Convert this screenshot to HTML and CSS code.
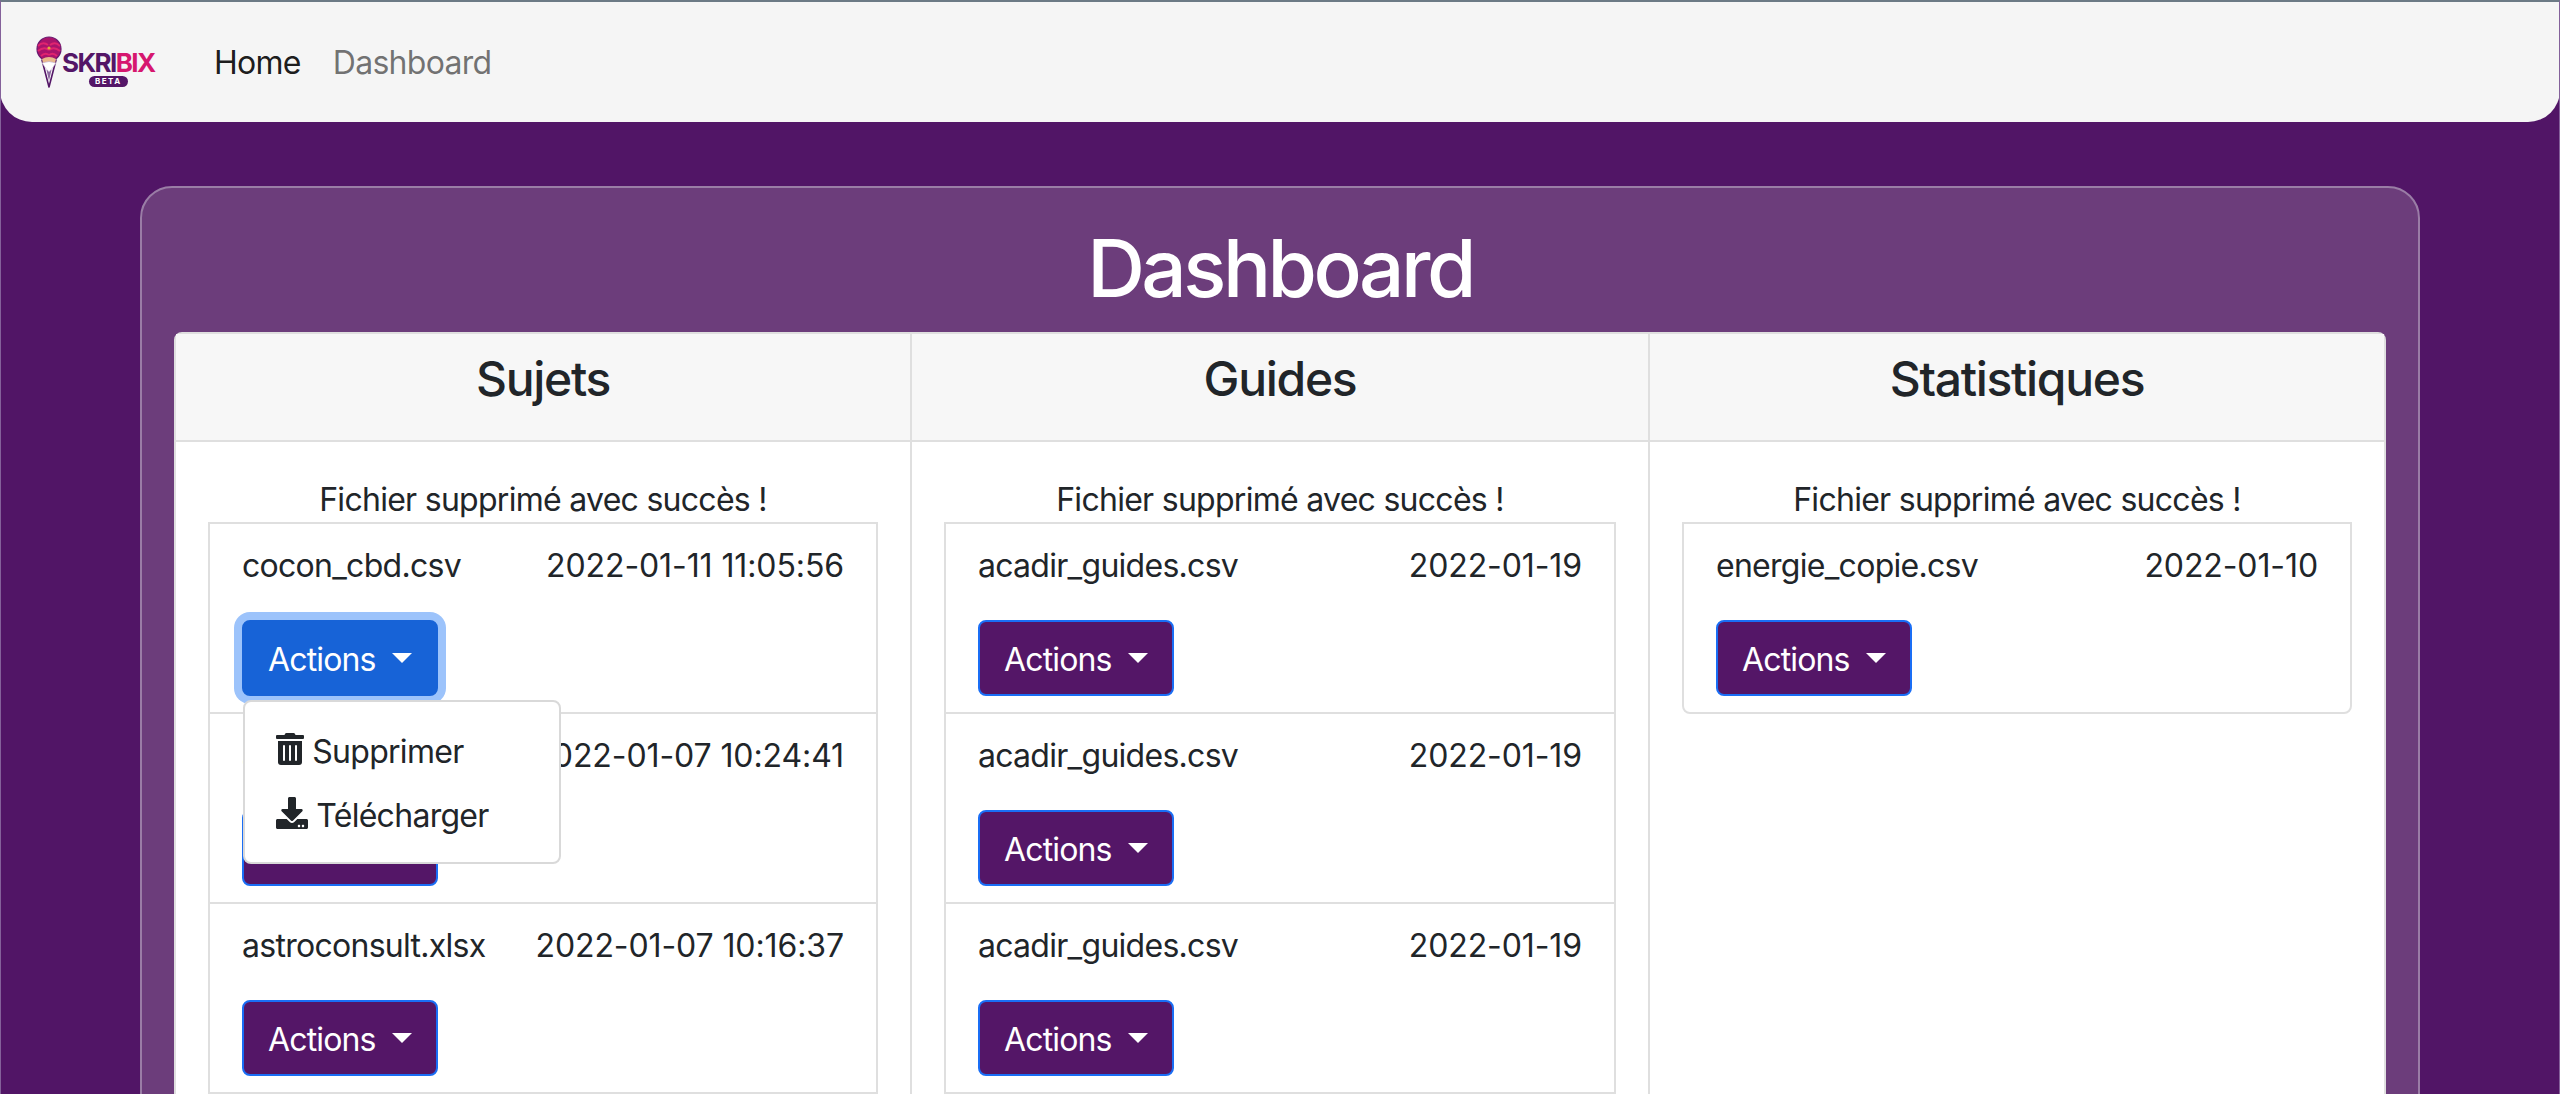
FILE: index.html
```html
<!DOCTYPE html>
<html lang="fr">
<head>
    <meta charset="UTF-8">
    <meta name="viewport" content="width=device-width, initial-scale=1.0">
    <title>Dashboard</title>
    <link rel="stylesheet" href="styles.css">
</head>
<body>

<nav class="navbar">
    <a class="brand" href="#">
        <svg class="brand-icon" viewBox="0 0 30 52" width="30" height="52" aria-hidden="true">
            <path d="M8 24 L15 51 L22 24 Z" fill="#fff" stroke="#541667" stroke-width="1.6" stroke-linejoin="round"/>
            <path d="M12.5 34 L15 45 L17.5 34 Z" fill="#8d6aa0"/>
            <circle cx="15" cy="13" r="12" fill="#a9146c" stroke="#6b1a70" stroke-width="1.2"/>
            <path d="M4 10 Q9 5 14 9 M4 15 Q10 10 15 14 M7 20 Q11 16 15 19 M26 10 Q21 5 16 9 M26 15 Q20 10 15 14 M23 20 Q19 16 15 19" stroke="#e0246f" stroke-width="2" fill="none"/>
            <circle cx="15" cy="12" r="1.6" fill="#e5a93c"/>
            <path d="M8 23 Q15 19 22 23 L21 27 L9 27 Z" fill="#e9b98c"/>
            <path d="M8 27 Q15 24 22 27 Q18 33 15 36 Q12 33 8 27 Z" fill="#fff" stroke="#b9a3c4" stroke-width="0.6"/>
        </svg>
        <span class="brand-text">
            <span class="brand-name"><span class="sk">SKRI</span><span class="bx">BIX</span></span>
            <span class="brand-beta">BETA</span>
        </span>
    </a>
    <a class="nav-link active" href="#">Home</a>
    <a class="nav-link" href="#">Dashboard</a>
</nav>

<main class="main">
    <section class="panel">
        <h1>Dashboard</h1>
        <div class="card-group">

            <div class="card">
                <div class="card-header"><h2>Sujets</h2></div>
                <div class="card-body">
                    <p class="message">Fichier supprimé avec succès !</p>
                    <ul class="list-group">
                        <li class="list-item">
                            <div class="file-row"><span>cocon_cbd.csv</span><span class="date">2022-01-11 11:05:56</span></div>
                            <div class="dropdown">
                                <button class="btn-actions open">Actions <i class="caret"></i></button>
                                <div class="dropdown-menu">
                                    <a class="dropdown-item" href="#">
                                        <svg class="icon" viewBox="0 0 448 512" width="28" height="32" aria-hidden="true"><path d="M32 464a48 48 0 0 0 48 48h288a48 48 0 0 0 48-48V128H32zm272-256a16 16 0 0 1 32 0v224a16 16 0 0 1-32 0zm-96 0a16 16 0 0 1 32 0v224a16 16 0 0 1-32 0zm-96 0a16 16 0 0 1 32 0v224a16 16 0 0 1-32 0zM432 32H312l-9.4-18.7A24 24 0 0 0 281.1 0H166.8a23.72 23.72 0 0 0-21.4 13.3L136 32H16A16 16 0 0 0 0 48v32a16 16 0 0 0 16 16h416a16 16 0 0 0 16-16V48a16 16 0 0 0-16-16z"/></svg>
                                        Supprimer
                                    </a>
                                    <a class="dropdown-item" href="#">
                                        <svg class="icon" viewBox="0 0 512 512" width="32" height="32" aria-hidden="true"><path d="M216 0h80c13.3 0 24 10.7 24 24v168h87.7c17.8 0 26.7 21.5 14.1 34.1L269.7 378.3c-7.5 7.5-19.8 7.5-27.3 0L90.1 226.1c-12.6-12.6-3.7-34.1 14.1-34.1H192V24c0-13.3 10.7-24 24-24zm296 376v112c0 13.3-10.7 24-24 24H24c-13.3 0-24-10.7-24-24V376c0-13.3 10.7-24 24-24h146.7l49 49c20.1 20.1 52.5 20.1 72.6 0l49-49H488c13.3 0 24 10.7 24 24zm-124 88c0-11-9-20-20-20s-20 9-20 20 9 20 20 20 20-9 20-20zm64 0c0-11-9-20-20-20s-20 9-20 20 9 20 20 20 20-9 20-20z"/></svg>
                                        Télécharger
                                    </a>
                                </div>
                            </div>
                        </li>
                        <li class="list-item">
                            <div class="file-row"><span>astroconsult.xlsx</span><span class="date">2022-01-07 10:24:41</span></div>
                            <div class="dropdown"><button class="btn-actions">Actions <i class="caret"></i></button></div>
                        </li>
                        <li class="list-item">
                            <div class="file-row"><span>astroconsult.xlsx</span><span class="date">2022-01-07 10:16:37</span></div>
                            <div class="dropdown"><button class="btn-actions">Actions <i class="caret"></i></button></div>
                        </li>
                    </ul>
                </div>
            </div>

            <div class="card">
                <div class="card-header"><h2>Guides</h2></div>
                <div class="card-body">
                    <p class="message">Fichier supprimé avec succès !</p>
                    <ul class="list-group">
                        <li class="list-item">
                            <div class="file-row"><span>acadir_guides.csv</span><span class="date">2022-01-19</span></div>
                            <div class="dropdown"><button class="btn-actions">Actions <i class="caret"></i></button></div>
                        </li>
                        <li class="list-item">
                            <div class="file-row"><span>acadir_guides.csv</span><span class="date">2022-01-19</span></div>
                            <div class="dropdown"><button class="btn-actions">Actions <i class="caret"></i></button></div>
                        </li>
                        <li class="list-item">
                            <div class="file-row"><span>acadir_guides.csv</span><span class="date">2022-01-19</span></div>
                            <div class="dropdown"><button class="btn-actions">Actions <i class="caret"></i></button></div>
                        </li>
                    </ul>
                </div>
            </div>

            <div class="card">
                <div class="card-header"><h2>Statistiques</h2></div>
                <div class="card-body">
                    <p class="message">Fichier supprimé avec succès !</p>
                    <ul class="list-group">
                        <li class="list-item">
                            <div class="file-row"><span>energie_copie.csv</span><span class="date">2022-01-10</span></div>
                            <div class="dropdown"><button class="btn-actions">Actions <i class="caret"></i></button></div>
                        </li>
                    </ul>
                </div>
            </div>

        </div>
    </section>
</main>

</body>
</html>
```

FILE: styles.css
```css
html, body {
    height: 100%;
    margin: 0;
}

body {
    box-sizing: border-box;
    height: 1094px;
    overflow: hidden;
    background-color: #511566;
    border-top: 2px solid #6c7a85;
    border-left: 1px solid #84619a;
    border-right: 1px solid #84619a;
    font-family: Inter, "Noto Sans", sans-serif;
    font-size: 32px;
    line-height: 48px;
    letter-spacing: -0.72px;
    color: #212529;
}

/* Top bar */
.navbar {
    display: flex;
    align-items: center;
    height: 120px;
    margin: 0 -1px;
    background-color: #f5f5f5;
    border-radius: 0 0 32px 32px;
}

.brand {
    display: flex;
    align-items: flex-start;
    width: 157px;
    margin-left: 34px;
    margin-right: 7px;
    text-decoration: none;
}

.brand-icon {
    flex: none;
}

.brand-text {
    display: flex;
    flex-direction: column;
    align-items: center;
    margin-left: -2px;
    margin-top: 15px;
}

.brand-name {
    font-size: 26px;
    line-height: 24px;
    font-weight: 700;
    letter-spacing: -1.6px;
}

.sk {
    color: #541667;
}

.bx {
    color: #d6176f;
}

.brand-beta {
    margin-top: 1px;
    padding: 0 6px;
    background-color: #541667;
    border-radius: 6px;
    color: #fff;
    font-size: 8px;
    line-height: 11px;
    font-weight: 700;
    letter-spacing: 1.5px;
}

.nav-link {
    padding: 2px 16px 0;
    color: rgba(0, 0, 0, 0.55);
    text-decoration: none;
}

.nav-link.active {
    color: rgba(0, 0, 0, 0.9);
}

/* Translucent panel */
.main {
    padding: 64px 139px 0;
}

.panel {
    padding: 32px 32px 48px;
    background-color: #6c3d7b;
    border: 2px solid #9a7da6;
    border-radius: 32px;
}

.panel h1 {
    margin: 0 0 16px;
    color: #fff;
    font-size: 80px;
    line-height: 96px;
    font-weight: 550;
    letter-spacing: -3.5px;
    text-align: center;
}

.card-group {
    display: grid;
    grid-template-columns: 738px 738px 736px;
}

.card {
    box-sizing: border-box;
    min-width: 0;
    background-color: #fff;
    border: 2px solid #dfdfdf;
    border-left-width: 0;
}

.card:first-child {
    border-left-width: 2px;
    border-top-left-radius: 8px;
}

.card:last-child {
    border-top-right-radius: 8px;
}

.card-header {
    box-sizing: border-box;
    height: 108px;
    padding: 21px 32px 0;
    background-color: #f7f7f7;
    border-bottom: 2px solid #dfdfdf;
}

.card-header h2 {
    margin: 0;
    font-size: 48px;
    line-height: 48px;
    font-weight: 500;
    letter-spacing: -1.3px;
    text-align: center;
}

.card-body {
    padding: 32px;
}

.message {
    margin: 0 0 -2px;
    padding-top: 2px;
    text-align: center;
}

/* File list */
.list-group {
    margin: 0;
    padding: 0;
    list-style: none;
    border: 2px solid #dfdfdf;
}

.card:last-child .list-group {
    border-radius: 0 0 8px 8px;
}

.list-item {
    padding: 16px 32px;
}

.list-item + .list-item {
    border-top: 2px solid #dfdfdf;
}

.file-row {
    display: flex;
    justify-content: space-between;
    padding-top: 2px;
    margin-bottom: 30px;
}

.date {
    letter-spacing: -0.1px;
}

.dropdown {
    position: relative;
}

.btn-actions {
    display: block;
    padding: 14px 24px 10px;
    background-color: #541667;
    border: 2px solid #1a6ef5;
    border-radius: 8px;
    color: #fff;
    font-family: inherit;
    font-size: 32px;
    line-height: 48px;
    letter-spacing: -0.85px;
    cursor: pointer;
}

.btn-actions.open {
    background-color: #1763d7;
    border-color: #1763d7;
    box-shadow: 0 0 0 8px #9cc3fb;
}

.caret {
    display: inline-block;
    margin-left: 8px;
    vertical-align: 8px;
    border-top: 10px solid #fff;
    border-left: 10px solid transparent;
    border-right: 10px solid transparent;
}

/* Open menu, sits over the rows below */
.dropdown-menu {
    position: absolute;
    top: 80px;
    left: 1px;
    z-index: 10;
    box-sizing: border-box;
    width: 318px;
    padding: 16px 0;
    background-color: #fff;
    border: 2px solid #d9d9d9;
    border-radius: 8px;
}

.dropdown-item {
    display: block;
    padding: 10px 32px 6px 31px;
    color: #212529;
    text-decoration: none;
}

.icon {
    fill: #212529;
    vertical-align: -2px;
}
```
